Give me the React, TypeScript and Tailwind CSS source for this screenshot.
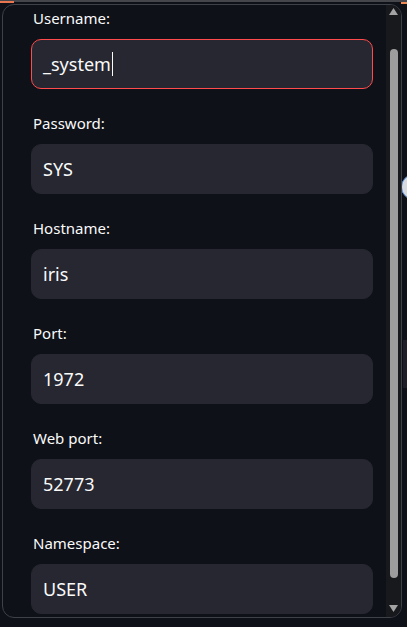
const fields = [
  { label: "Username:", value: "_system", focused: true },
  { label: "Password:", value: "SYS" },
  { label: "Hostname:", value: "iris" },
  { label: "Port:", value: "1972" },
  { label: "Web port:", value: "52773" },
  { label: "Namespace:", value: "USER" },
];

function Field({ label, value, focused }: { label: string; value: string; focused?: boolean }) {
  return (
    <div className="flex flex-col mb-[24px]">
      <label className="h-[21px] leading-[21px] text-[15px] text-[#fafafa] pl-[2px] mb-[10px]">
        {label}
      </label>
      <div
        className={
          focused
            ? "h-[50px] shrink-0 rounded-[10px] bg-[#262730] border border-[#ff4b4b] px-[11px] flex items-center"
            : "h-[50px] shrink-0 rounded-[10px] bg-[#262730] border border-[#262730] px-[11px] flex items-center"
        }
      >
        <span className="text-[18px] text-[#fafafa]">{value}</span>
        {focused && <span className="w-px h-[24px] bg-[#fafafa] ml-px" />}
      </div>
    </div>
  );
}

export default function App() {
  return (
    <div
      className="relative w-[407px] h-[627px] bg-[#0e1117] overflow-hidden"
      style={{ fontFamily: "'Noto Sans', sans-serif" }}
    >
      {/* app header stripe behind the dialog */}
      <div className="absolute top-0 left-0 w-full h-[2px] bg-[#45464c]" />
      <div className="absolute top-[1px] left-0 w-[14px] h-[2px] bg-[#e8764f]" />
      <div className="absolute top-[2px] right-0 w-[6px] h-[2px] bg-[#f08a52]" />

      {/* bits of the page visible to the right */}
      <div className="absolute top-[174px] left-[401px] w-[26px] h-[26px] rounded-full bg-[#d6d9de] border border-[#5b8fd9]" />
      <div className="absolute top-[340px] left-[403px] w-[10px] h-[48px] bg-[#1f2027]" />

      {/* dialog */}
      <div className="absolute top-[4px] left-[2px] w-[400px] h-[614px] rounded-[12px] border border-[#3f4148] bg-[#0e1117] flex overflow-hidden">
        <div className="flex-1 pl-[28px] pr-[13px] pt-[3px] overflow-hidden">
          {fields.map((f) => (
            <Field key={f.label} label={f.label} value={f.value} focused={f.focused} />
          ))}
        </div>
        <div className="w-[15px] bg-[#18191d] flex flex-col items-center">
          <svg width="9" height="7" viewBox="0 0 9 7" className="mt-[3px]">
            <polygon points="4.5,0 9,7 0,7" fill="#a3a3a3" />
          </svg>
          <div className="w-[8px] mt-[34px] h-[529px] rounded-[4px] bg-[#9d9d9d]" />
          <div className="flex-1" />
          <svg width="9" height="7" viewBox="0 0 9 7" className="mb-[5px]">
            <polygon points="0,0 9,0 4.5,7" fill="#a3a3a3" />
          </svg>
        </div>
      </div>
    </div>
  );
}
